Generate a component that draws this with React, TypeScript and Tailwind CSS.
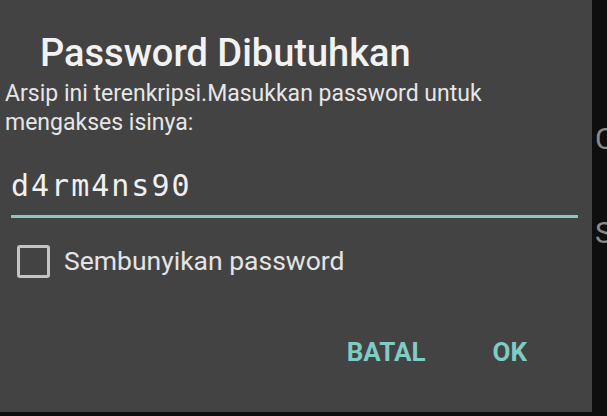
import React from 'react';

const App: React.FC = () => {
  return (
    <div className="w-[607px] h-[416px] bg-[#0e0e0e] overflow-hidden flex flex-col font-['Roboto',sans-serif]">
      <div className="flex h-[412px]">
        {/* Dialog */}
        <div className="w-[592px] h-full bg-[#434343] flex flex-col">
          <h1 className="pt-[34px] pl-[40px] text-[38px] leading-[38px] font-medium text-[#f2f2f2]">
            Password Dibutuhkan
          </h1>

          <p className="mt-[7px] pl-[5px] text-[23px] leading-[29px] text-[#e6e6e6]">
            Arsip ini terenkripsi.Masukkan password untuk
            <br />
            mengakses isinya:
          </p>

          <div className="mt-[31px] ml-[11px] mr-[14px] pb-[11px] border-b-[3px] border-[#80cbc4]">
            <span className="block font-['DejaVu_Sans_Mono',monospace] text-[30px] leading-[36px] tracking-[2px] text-[#f0f0f0]">
              d4rm4ns90
            </span>
          </div>

          <label className="mt-[27px] ml-[17px] flex items-center gap-[14px]">
            <span className="w-[33px] h-[33px] border-[3px] border-[#c4c4c4] rounded-[3px]" />
            <span className="text-[26.5px] leading-none text-[#e4e4e4]">Sembunyikan password</span>
          </label>

          <div className="mt-[61px] pr-[65px] flex justify-end gap-[67px]">
            <button className="text-[26px] leading-none font-bold text-[#80cbc4]">BATAL</button>
            <button className="text-[26px] leading-none font-bold text-[#80cbc4]">OK</button>
          </div>
        </div>

        {/* Background behind dialog */}
        <div className="flex-1 overflow-hidden flex flex-col pl-[3px] text-[30px] leading-none text-[#8a8a8a]">
          <span className="mt-[124px]">C</span>
          <span className="mt-[64px]">S</span>
        </div>
      </div>
    </div>
  );
};

export default App;
